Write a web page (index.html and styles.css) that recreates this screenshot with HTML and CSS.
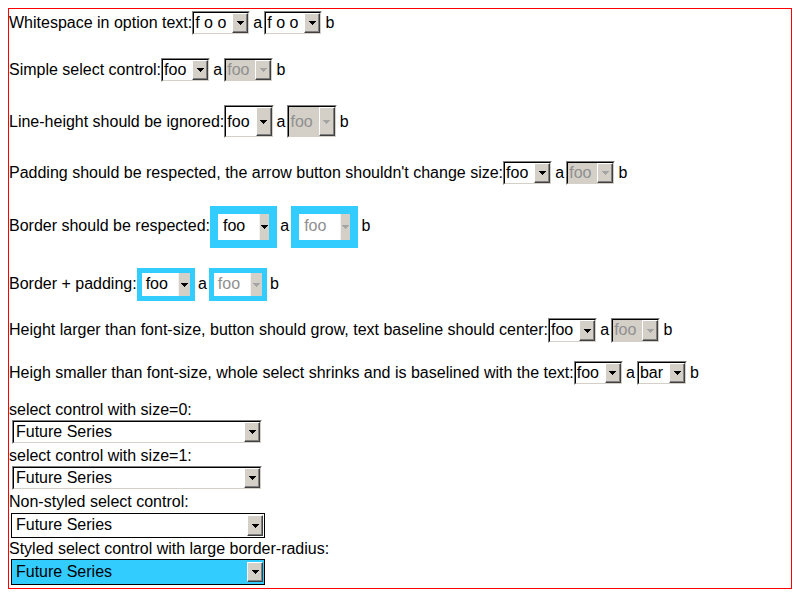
FILE: index.html
```html
<!DOCTYPE html>
<html>
<head>
<meta charset="utf-8">
<title>select tests</title>
<link rel="stylesheet" href="styles.css">
</head>
<body>
<div class="box">
  <div class="row row-1">Whitespace in option text:<span class="sel"><span class="sel-in"><span class="t pre">f o o</span><span class="btn"><svg viewBox="0 0 7 4"><path d="M0 0h7v1H0zM1 1h5v1H1zM2 2h3v1H2zM3 3h1v1H3z"/></svg></span></span></span><span class="sep">a</span><span class="sel"><span class="sel-in"><span class="t pre">f o o</span><span class="btn"><svg viewBox="0 0 7 4"><path d="M0 0h7v1H0zM1 1h5v1H1zM2 2h3v1H2zM3 3h1v1H3z"/></svg></span></span></span><span class="end">b</span></div>

  <div class="row row-2">Simple select control:<span class="sel"><span class="sel-in"><span class="t">foo</span><span class="btn"><svg viewBox="0 0 7 4"><path d="M0 0h7v1H0zM1 1h5v1H1zM2 2h3v1H2zM3 3h1v1H3z"/></svg></span></span></span><span class="sep">a</span><span class="sel dis"><span class="sel-in"><span class="t">foo</span><span class="btn"><svg viewBox="0 0 7 4"><path d="M0 0h7v1H0zM1 1h5v1H1zM2 2h3v1H2zM3 3h1v1H3z"/></svg></span></span></span><span class="end">b</span></div>

  <div class="row row-3">Line-height should be ignored:<span class="sel tall"><span class="sel-in"><span class="t">foo</span><span class="btn"><svg viewBox="0 0 7 4"><path d="M0 0h7v1H0zM1 1h5v1H1zM2 2h3v1H2zM3 3h1v1H3z"/></svg></span></span></span><span class="sep">a</span><span class="sel tall dis"><span class="sel-in"><span class="t">foo</span><span class="btn"><svg viewBox="0 0 7 4"><path d="M0 0h7v1H0zM1 1h5v1H1zM2 2h3v1H2zM3 3h1v1H3z"/></svg></span></span></span><span class="end">b</span></div>

  <div class="row row-4">Padding should be respected, the arrow button shouldn't change size:<span class="sel"><span class="sel-in"><span class="t">foo</span><span class="btn"><svg viewBox="0 0 7 4"><path d="M0 0h7v1H0zM1 1h5v1H1zM2 2h3v1H2zM3 3h1v1H3z"/></svg></span></span></span><span class="sep">a</span><span class="sel dis"><span class="sel-in"><span class="t">foo</span><span class="btn"><svg viewBox="0 0 7 4"><path d="M0 0h7v1H0zM1 1h5v1H1zM2 2h3v1H2zM3 3h1v1H3z"/></svg></span></span></span><span class="end">b</span></div>

  <div class="row row-5">Border should be respected:<span class="bsel"><span class="t">foo</span><span class="strip"><svg viewBox="0 0 7 4"><path d="M0 0h7v1H0zM1 1h5v1H1zM2 2h3v1H2zM3 3h1v1H3z"/></svg></span></span><span class="sep">a</span><span class="bsel dis"><span class="t">foo</span><span class="strip"><svg viewBox="0 0 7 4"><path d="M0 0h7v1H0zM1 1h5v1H1zM2 2h3v1H2zM3 3h1v1H3z"/></svg></span></span><span class="end">b</span></div>

  <div class="row row-6">Border + padding:<span class="bsel thin"><span class="t">foo</span><span class="strip"><svg viewBox="0 0 7 4"><path d="M0 0h7v1H0zM1 1h5v1H1zM2 2h3v1H2zM3 3h1v1H3z"/></svg></span></span><span class="sep">a</span><span class="bsel thin dis"><span class="t">foo</span><span class="strip"><svg viewBox="0 0 7 4"><path d="M0 0h7v1H0zM1 1h5v1H1zM2 2h3v1H2zM3 3h1v1H3z"/></svg></span></span><span class="end">b</span></div>

  <div class="row row-7">Height larger than font-size, button should grow, text baseline should center:<span class="sel h25"><span class="sel-in"><span class="t">foo</span><span class="btn"><svg viewBox="0 0 7 4"><path d="M0 0h7v1H0zM1 1h5v1H1zM2 2h3v1H2zM3 3h1v1H3z"/></svg></span></span></span><span class="sep">a</span><span class="sel h25 dis"><span class="sel-in"><span class="t">foo</span><span class="btn"><svg viewBox="0 0 7 4"><path d="M0 0h7v1H0zM1 1h5v1H1zM2 2h3v1H2zM3 3h1v1H3z"/></svg></span></span></span><span class="end">b</span></div>

  <div class="row row-8">Heigh smaller than font-size, whole select shrinks and is baselined with the text:<span class="sel"><span class="sel-in"><span class="t">foo</span><span class="btn"><svg viewBox="0 0 7 4"><path d="M0 0h7v1H0zM1 1h5v1H1zM2 2h3v1H2zM3 3h1v1H3z"/></svg></span></span></span><span class="sep">a</span><span class="sel"><span class="sel-in"><span class="t">bar</span><span class="btn"><svg viewBox="0 0 7 4"><path d="M0 0h7v1H0zM1 1h5v1H1zM2 2h3v1H2zM3 3h1v1H3z"/></svg></span></span></span><span class="end">b</span></div>

  <div class="lab lab-first">select control with size=0:</div>
  <div class="sel wide"><span class="sel-in"><span class="t">Future Series</span><span class="btn"><svg viewBox="0 0 7 4"><path d="M0 0h7v1H0zM1 1h5v1H1zM2 2h3v1H2zM3 3h1v1H3z"/></svg></span></span></div>
  <div class="lab">select control with size=1:</div>
  <div class="sel wide"><span class="sel-in"><span class="t">Future Series</span><span class="btn"><svg viewBox="0 0 7 4"><path d="M0 0h7v1H0zM1 1h5v1H1zM2 2h3v1H2zM3 3h1v1H3z"/></svg></span></span></div>
  <div class="lab">Non-styled select control:</div>
  <div class="plain"><span class="t">Future Series</span><span class="btn"><svg viewBox="0 0 7 4"><path d="M0 0h7v1H0zM1 1h5v1H1zM2 2h3v1H2zM3 3h1v1H3z"/></svg></span></div>
  <div class="lab">Styled select control with large border-radius:</div>
  <div class="plain styled"><span class="t">Future Series</span><span class="btn"><svg viewBox="0 0 7 4"><path d="M0 0h7v1H0zM1 1h5v1H1zM2 2h3v1H2zM3 3h1v1H3z"/></svg></span></div>
</div>
</body>
</html>
```

FILE: styles.css
```css
body {
  margin: 8px;
  background: #fff;
  color: #000;
  font-family: "Liberation Sans", Arial, sans-serif;
  font-size: 16px;
  line-height: 18px;
}

.box {
  border: 1px solid #ff0000;
}

.row {
  line-height: 18px;
  white-space: nowrap;
}

.row-1 { margin-top: 2px; }
.row-2 { margin-top: 23px; }
.row-3 { margin-top: 23px; }
.row-4 { margin-top: 23px; }
.row-5 { margin-top: 21px; }
.row-6 { margin-top: 20px; }
.row-7 { margin-top: 17px; }
.row-8 { margin-top: 18px; }

.sep {
  margin: 0 2px 0 3px;
}

.end {
  margin-left: 3px;
}

svg {
  display: block;
  width: 7px;
  height: 4px;
  fill: currentColor;
}

/* classic 3D select */
.sel {
  display: inline-flex;
  vertical-align: baseline;
  border: 1px solid;
  border-color: #808080 #ffffff #ffffff #808080;
}

.sel-in {
  display: flex;
  flex: 1;
  border: 1px solid;
  border-color: #000000 #d4d0c8 #d4d0c8 #000000;
  background: #fff;
}

.sel .t {
  padding: 1px 6px 1px 1px;
  line-height: 18px;
}

.pre { white-space: pre; }

.btn {
  flex: none;
  width: 16px;
  box-sizing: border-box;
  background: #d4d0c8;
  border: 1px solid;
  border-color: #ffffff #404040 #404040 #ffffff;
  box-shadow: inset -1px -1px 0 #808080;
  display: flex;
  align-items: center;
  justify-content: center;
  color: #000;
}

.sel.tall .t {
  padding-top: 0;
  padding-bottom: 0;
  line-height: 29px;
}

.sel.h25 .t {
  padding-bottom: 2px;
}

.sel.dis .sel-in { background: #d4d0c8; }
.dis .t { color: #8f8f8f; }
.dis .btn, .dis .strip { color: #a4a4a4; }

/* blue bordered selects */
.bsel {
  display: inline-flex;
  vertical-align: baseline;
  border: 8px solid #33ccff;
  background: #fff;
}

.bsel .t {
  padding: 3px 14px 5px 5px;
  line-height: 18px;
}

.strip {
  flex: none;
  width: 10px;
  box-sizing: border-box;
  background: #d4d0c8;
  border-left: 1px solid #f2f2f2;
  display: flex;
  align-items: center;
  justify-content: center;
  color: #000;
}

.bsel.thin {
  border-width: 5px;
}

.bsel.thin .t {
  padding: 2px 10px 3px 4px;
}

.bsel.thin .strip {
  width: 12px;
}

/* block selects */
.lab {
  line-height: 18px;
}

.lab-first {
  margin-top: 16px;
}

.sel.wide {
  display: flex;
  width: 250px;
  box-sizing: border-box;
  margin: 1px 3px 3px;
}

.sel.wide .t {
  flex: 1;
  padding: 1px 2px;
}

.plain {
  display: flex;
  width: 254px;
  box-sizing: border-box;
  margin: 2px 2px 2px;
  border: 1px solid #000;
  background: #fff;
}

.plain .t {
  flex: 1;
  padding: 2px 4px 3px;
  line-height: 18px;
}

.plain .btn {
  margin: 1px;
}

.plain.styled {
  background: #33ccff;
  margin-top: 1px;
  margin-bottom: 3px;
}

.plain.styled .t {
  padding: 3px 4px 3px;
}

.plain.styled .btn {
  margin: 2px 1px;
}
```
